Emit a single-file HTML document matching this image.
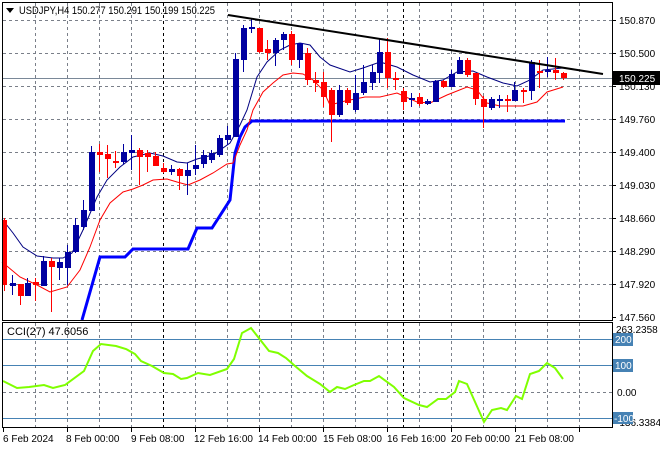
<!DOCTYPE html>
<html><head><meta charset="utf-8"><style>
html,body{margin:0;padding:0;background:#fff;width:660px;height:450px;overflow:hidden}
svg{display:block;font-family:"Liberation Sans",sans-serif}
</style></head><body>
<svg width="660" height="450" viewBox="0 0 660 450" xmlns="http://www.w3.org/2000/svg">
<rect width="660" height="450" fill="#fff"/>
<g stroke="#7a7f89" stroke-width="1" stroke-dasharray="3,3" fill="none">
<path d="M35.5 3V320M67.5 3V320M99.5 3V320M131.5 3V320M195.5 3V320M227.5 3V320M259.5 3V320M291.5 3V320M323.5 3V320M355.5 3V320M387.5 3V320M419.5 3V320M451.5 3V320M483.5 3V320M515.5 3V320M547.5 3V320M579.5 3V320"/>
<path d="M3 20.5H612M3 53.5H612M3 86.5H612M3 119.5H612M3 152.5H612M3 185.5H612M3 218.5H612M3 251.5H612M3 284.5H612"/>
<path d="M35.5 323V427M67.5 323V427M99.5 323V427M131.5 323V427M195.5 323V427M227.5 323V427M259.5 323V427M291.5 323V427M323.5 323V427M355.5 323V427M387.5 323V427M419.5 323V427M451.5 323V427M483.5 323V427M515.5 323V427M547.5 323V427M579.5 323V427"/>
<path d="M3 392.5H612"/>
</g>
<g stroke="#000" stroke-width="1" stroke-dasharray="3,3"><path d="M163.5 3V320M403.5 3V320M163.5 323V427M403.5 323V427"/></g>
<path d="M3 78.5H612" stroke="#7a8898" stroke-width="1"/>
<polyline fill="none" stroke="#0000ff" stroke-width="3" points="82,320 100,257 125,257 133,249 188,249 197,228 212,228 230,200 235,153 240,137 245,127 252,121 565,121"/>
<polyline fill="none" stroke="#ff0000" stroke-width="1" points="2,262 20,277 37,285 50,292 67,287 80,270 90,247 100,220 110,203 123,192 133,189 143,185 153,180 167,179 177,182 188,185 200,180 213,173 227,164 233,163 240,145 247,130 253,110 263,92 273,83 283,75 293,73 303,74 313,80 323,90 330,105 345,101 365,97 380,97 397,93 417,102 430,103 447,95 467,87 477,90 487,103 500,106 523,106 537,102 547,92 563,87"/>
<polyline fill="none" stroke="#000080" stroke-width="1" points="2,219 13,233 23,247 37,256 53,258 63,258 72,253 83,230 97,197 107,180 120,167 133,157 150,153 163,156 177,162 187,163 197,159 213,155 230,143 240,125 247,110 257,77 267,62 280,50 290,45 300,43 310,45 320,57 330,65 350,72 363,68 380,62 397,67 413,75 430,82 443,80 457,72 473,71 487,77 503,83 517,86 530,80 543,70 563,68"/>
<path stroke="#0000a0" stroke-width="1" d="M12.5 275V295M27.5 278V296M43.5 256V286M59.5 258V280M67.5 245V285M75.5 218V253M83.5 200V230M91.5 146V211M123.5 144V164M131.5 135V170M171.5 165V175M187.5 163V195M195.5 145V175M203.5 150V168M211.5 150V163M219.5 135V157M227.5 126V145M235.5 53V137M243.5 25V72M251.5 18V33M275.5 38V66M283.5 32V50M299.5 43V68M339.5 85V117M355.5 75V112M363.5 65V95M372.5 65V90M379.5 38V83M411.5 93V107M427.5 99V105M435.5 80V102M451.5 70V87M459.5 57V74M491.5 97V110M499.5 95V108M514.5 82V101M531.5 60V100M547.5 57V77"/>
<path stroke="#ff0000" stroke-width="1" d="M4.5 218V291M20.5 284V305M35.5 278V301M51.5 258V312M99.5 144V172M107.5 145V178M115.5 151V168M139.5 148V185M147.5 150V172M155.5 152V166M163.5 163V173M179.5 168V190M259.5 28V53M267.5 40V60M291.5 31V65M307.5 48V85M315.5 72V92M323.5 72V107M331.5 88V142M347.5 88V105M387.5 38V88M395.5 72V90M403.5 88V110M419.5 93V106M443.5 80V88M467.5 58V77M475.5 73V105M483.5 96V128M507.5 95V112M523.5 88V103M539.5 60V88M555.5 58V80M563.5 72V80"/>
<g fill="#0000a0">
<rect x="10" y="283" width="6" height="3"/><rect x="25" y="283" width="6" height="13"/><rect x="41" y="261" width="6" height="25"/><rect x="57" y="262" width="6" height="6"/><rect x="65" y="252" width="6" height="16"/><rect x="73" y="225" width="6" height="27"/><rect x="81" y="210" width="6" height="17"/><rect x="89" y="152" width="6" height="59"/><rect x="121" y="152" width="6" height="10"/><rect x="129" y="150" width="6" height="3"/><rect x="169" y="169" width="6" height="3"/><rect x="185" y="170" width="6" height="6"/><rect x="193" y="165" width="6" height="4"/><rect x="201" y="155" width="6" height="9"/><rect x="209" y="153" width="6" height="7"/><rect x="217" y="138" width="6" height="17"/><rect x="225" y="135" width="6" height="5"/><rect x="233" y="59" width="6" height="78"/><rect x="241" y="28" width="6" height="32"/><rect x="249" y="27" width="6" height="2"/><rect x="273" y="40" width="6" height="13"/><rect x="281" y="34" width="6" height="6"/><rect x="297" y="43" width="6" height="17"/><rect x="337" y="90" width="6" height="25"/><rect x="353" y="93" width="6" height="17"/><rect x="361" y="82" width="6" height="11"/><rect x="370" y="72" width="6" height="11"/><rect x="377" y="52" width="6" height="21"/><rect x="409" y="98" width="6" height="2"/><rect x="425" y="101" width="6" height="3"/><rect x="433" y="81" width="6" height="21"/><rect x="449" y="74" width="6" height="13"/><rect x="457" y="60" width="6" height="14"/><rect x="489" y="99" width="6" height="9"/><rect x="497" y="99" width="6" height="2"/><rect x="512" y="90" width="6" height="11"/><rect x="529" y="62" width="6" height="29"/><rect x="545" y="70" width="6" height="2"/>
</g>
<g fill="#ff0000">
<rect x="3" y="220" width="4" height="65"/><rect x="18" y="284" width="6" height="12"/><rect x="33" y="282" width="6" height="3"/><rect x="49" y="261" width="6" height="6"/><rect x="97" y="152" width="6" height="3"/><rect x="105" y="154" width="6" height="5"/><rect x="113" y="161" width="6" height="2"/><rect x="137" y="150" width="6" height="7"/><rect x="145" y="153" width="6" height="4"/><rect x="153" y="156" width="6" height="10"/><rect x="161" y="168" width="6" height="4"/><rect x="177" y="169" width="6" height="7"/><rect x="257" y="28" width="6" height="24"/><rect x="265" y="49" width="6" height="4"/><rect x="289" y="34" width="6" height="26"/><rect x="305" y="53" width="6" height="27"/><rect x="313" y="80" width="6" height="3"/><rect x="321" y="82" width="6" height="15"/><rect x="329" y="90" width="6" height="25"/><rect x="345" y="90" width="6" height="13"/><rect x="385" y="52" width="6" height="26"/><rect x="393" y="78" width="6" height="2"/><rect x="401" y="91" width="6" height="11"/><rect x="417" y="97" width="6" height="7"/><rect x="441" y="81" width="6" height="6"/><rect x="465" y="60" width="6" height="15"/><rect x="473" y="73" width="6" height="26"/><rect x="481" y="99" width="6" height="8"/><rect x="505" y="99" width="6" height="2"/><rect x="521" y="90" width="6" height="2"/><rect x="537" y="71" width="6" height="2"/><rect x="553" y="70" width="6" height="3"/><rect x="561" y="73" width="6" height="5"/>
</g>
<line x1="228" y1="15" x2="603" y2="74" stroke="#000" stroke-width="2"/>
<g stroke="#4682b4" stroke-width="1"><path d="M3 339.5H612M3 365.5H612M3 418.5H612"/></g>
<polyline fill="none" stroke="#7fff00" stroke-width="2" points="3,381 17,388 29,387 44,385 53,388 65,385 84,371 93,351 101,344 116,346 126,349 135,354 141,361 152,366 164,373 173,374 181,379 187,378 198,373 210,375 227,369 234,359 242,333 251,328 269,351 278,353 286,358 295,366 307,376 320,384 330,392 337,387 345,389 354,385 364,381 370,381 379,376 394,387 404,398 419,405 427,407 438,399 446,399 455,392 459,381 467,384 484,422 492,410 501,408 507,410 516,396 522,399 530,374 539,371 547,363 555,368 563,379"/>
<rect x="2.5" y="2.5" width="610" height="318" fill="none" stroke="#000"/>
<rect x="2.5" y="322.5" width="610" height="105" fill="none" stroke="#000"/>
<g stroke="#000"><path d="M3.5 428V432M67.5 428V432M131.5 428V432M195.5 428V432M259.5 428V432M323.5 428V432M387.5 428V432M451.5 428V432M515.5 428V432M579.5 428V432"/>
<path d="M612 20.5H616M612 53.5H616M612 86.5H616M612 119.5H616M612 152.5H616M612 185.5H616M612 218.5H616M612 251.5H616M612 284.5H616M612 317.5H616"/></g>
<g font-size="11" fill="#000">
<path d="M6 8h8l-4 5z" fill="#000"/>
<text x="19" y="14" textLength="196" lengthAdjust="spacingAndGlyphs">USDJPY,H4  150.277 150.291 150.199 150.225</text>
<text x="7" y="335">CCI(27) 47.6056</text>
</g>
<g font-size="10" fill="#000">
<text x="619" y="24">150.870</text><text x="619" y="57">150.500</text><text x="619" y="90">150.130</text><text x="619" y="123">149.760</text><text x="619" y="156">149.400</text><text x="619" y="189">149.030</text><text x="619" y="222">148.660</text><text x="619" y="255">148.290</text><text x="619" y="288">147.920</text><text x="619" y="321">147.560</text>
<text x="616" y="333">263.2358</text><text x="617" y="396">0.00</text><text x="616" y="426">-136.3384</text>
</g>
<rect x="613" y="71" width="47" height="14" fill="#000"/>
<text x="619" y="82" font-size="10" fill="#fff">150.225</text>
<g fill="#4682b4"><rect x="613" y="333" width="20" height="13"/><rect x="613" y="359" width="20" height="13"/><rect x="613" y="412" width="20" height="12"/></g>
<g font-size="10" fill="#fff"><text x="615" y="343">200</text><text x="615" y="369">100</text><text x="614" y="422">-100</text></g>
<g font-size="10" fill="#000">
<text x="3" y="442">6 Feb 2024</text><text x="66" y="442">8 Feb 00:00</text><text x="131" y="442">9 Feb 08:00</text><text x="194" y="442">12 Feb 16:00</text><text x="258" y="442">14 Feb 00:00</text><text x="323" y="442">15 Feb 08:00</text><text x="387" y="442">16 Feb 16:00</text><text x="451" y="442">20 Feb 00:00</text><text x="515" y="442">21 Feb 08:00</text>
</g>
</svg>
</body></html>
